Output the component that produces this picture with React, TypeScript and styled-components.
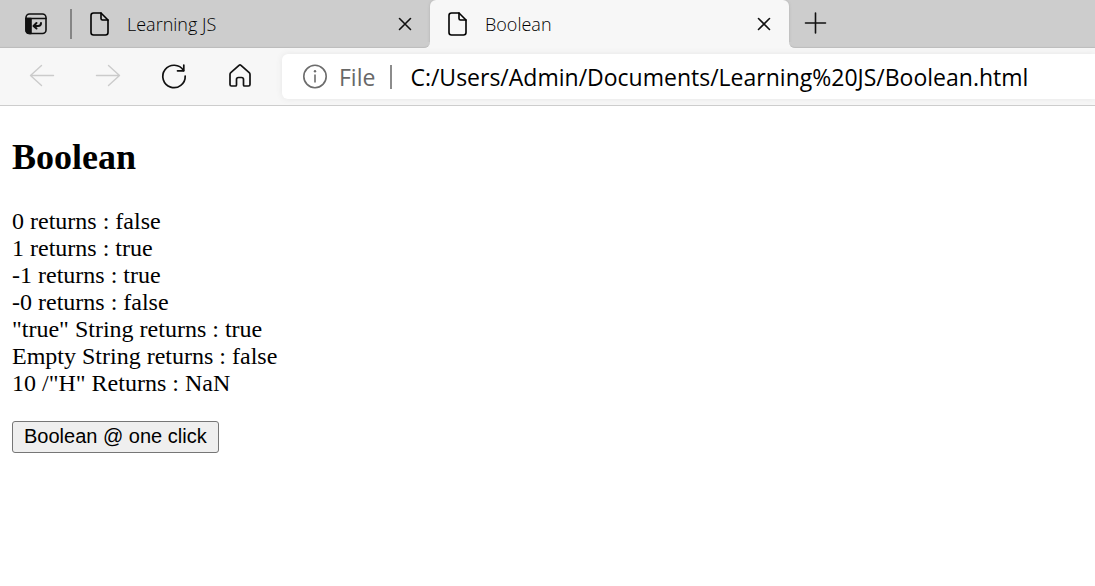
import React from "react";
import styled, { createGlobalStyle } from "styled-components";

const GlobalStyle = createGlobalStyle`
  *, *::before, *::after { box-sizing: border-box; }
  body { margin: 0; background: #fff; color: #000; }
  button, input { font: inherit; color: inherit; }
  svg { display: block; flex: none; overflow: visible; }
`;

const uiFont = `"Open Sans", "Noto Sans", sans-serif`;

const Chrome = styled.header`
  font-family: ${uiFont};
  background: #f7f7f7;
  border-bottom: 1px solid #cdcdcd;
`;

const TabBar = styled.div`
  display: flex;
  height: 48px;
  background: linear-gradient(#cdcdcd 50%, #f7f7f7 50%);
`;

const Strip = styled.div<{ $side: "left" | "right" }>`
  display: flex;
  align-items: center;
  background: #cdcdcd;
  box-shadow: inset 0 -2px 1px -1px #bcbcbc;
  ${(p) =>
    p.$side === "left"
      ? "flex: 0 0 430px; border-bottom-right-radius: 6px; padding-left: 18px;"
      : "flex: 1; border-bottom-left-radius: 6px; padding-left: 8px;"}
`;

const IconButton = styled.button<{ $faded?: boolean }>`
  display: flex;
  flex: none;
  align-items: center;
  justify-content: center;
  width: 36px;
  height: 36px;
  padding: 0;
  border: 0;
  background: transparent;
  color: ${(p) => (p.$faded ? "#cbcbcb" : "#111")};
`;

const TabDivider = styled.span`
  width: 2px;
  height: 30px;
  margin-left: 16px;
  background: #858585;
`;

const Tab = styled.div<{ $active?: boolean }>`
  display: flex;
  align-items: center;
  height: 48px;
  ${(p) =>
    p.$active
      ? "flex: 0 0 359px; padding: 0 7px 0 18px; background: #f7f7f7; border-radius: 6px 6px 0 0; box-shadow: 0 0 3px #b0b0b0; clip-path: inset(0 -3px 6px -3px);"
      : "flex: 1; padding: 0 7px 0 18px;"}
`;

const TabTitle = styled.button`
  display: flex;
  flex: 1;
  align-items: center;
  gap: 18px;
  padding: 0;
  border: 0;
  background: transparent;
  font-size: 18px;
  font-weight: 340;
  line-height: 24px;
  color: #000;
`;

const Toolbar = styled.nav`
  display: flex;
  align-items: center;
  height: 57px;
  padding: 6px 0 6px 24px;
`;

const NavButtons = styled.div`
  display: flex;
  flex: none;
  gap: 30px;
  padding-bottom: 2px;
`;

const AddressBar = styled.div`
  display: flex;
  flex: 1;
  align-items: center;
  height: 45px;
  margin-left: 24px;
  padding-left: 20px;
  background: #fff;
  border-radius: 6px 0 0 6px;
  box-shadow: 0 0 6px #e6e6e6;
  font-size: 23px;
  font-weight: 370;
  line-height: 30px;
`;

const Scheme = styled.label`
  padding-left: 11px;
  color: #686868;
`;

const AddressDivider = styled.span`
  width: 2px;
  height: 24px;
  margin: 0 18px 0 15px;
  background: #8c8c8c;
`;

const AddressInput = styled.input`
  flex: 1;
  min-width: 0;
  padding: 0;
  border: 0;
  outline: 0;
  background: transparent;
`;

const Page = styled.main`
  padding: 30px 12px;
  font-family: "Liberation Serif", "Times New Roman", serif;
  font-size: 24px;
  line-height: 27px;
`;

const Heading = styled.h2`
  margin: 0 0 30px;
  font-size: 36px;
  line-height: 42px;
`;

const Result = styled.div``;

const ActionButton = styled.button`
  height: 32px;
  margin-top: 24px;
  padding: 0 11px 2px;
  border: 1px solid #767676;
  border-radius: 3px;
  background: #efefef;
  font-family: "Liberation Sans", Arial, sans-serif;
  font-size: 20px;
  line-height: 24px;
`;

const stroke = {
  fill: "none",
  stroke: "currentColor",
  strokeWidth: 1.6,
  strokeLinecap: "round" as const,
  strokeLinejoin: "round" as const,
};

const TabActionsIcon = () => (
  <svg width="22" height="22" viewBox="0 0 22 22" {...stroke}>
    <rect x="1" y="1" width="20" height="19.5" rx="3.5" />
    <path d="M1 5.5H6V20.5H4.5Q1 20.5 1 17Z" fill="currentColor" />
    <path d="M1 5.5H21" />
    <path d="M16 10Q16 13 13 13H9M11.5 10L8.5 13L11.5 15.5" strokeWidth="2" />
  </svg>
);

const FileIcon = () => (
  <svg width="19" height="24" viewBox="0 0 19 24" {...stroke}>
    <path d="M3.5 1H11L18 8V20.5Q18 23 15.5 23H3.5Q1 23 1 20.5V3.5Q1 1 3.5 1Z" />
    <path d="M11 1V6.5Q11 8 12.5 8H18" />
  </svg>
);

const CloseIcon = () => (
  <svg width="12" height="12" viewBox="0 0 12 12" {...stroke}>
    <path d="M0.5 0.5L11.5 11.5M11.5 0.5L0.5 11.5" />
  </svg>
);

const PlusIcon = () => (
  <svg width="20" height="20" viewBox="0 0 20 20" {...stroke}>
    <path d="M10.5 -1V19M0.5 9H20.5" />
  </svg>
);

const ArrowIcon = ({ forward }: { forward?: boolean }) => (
  <svg width="24" height="20" viewBox="0 0 24 20" {...stroke} strokeWidth="1.4">
    <path d={forward ? "M0.5 9.5H23.5M12.5 -0.5L23.5 9.5L12.5 19.5" : "M23.5 9.5H0.5M11.5 -0.5L0.5 9.5L11.5 19.5"} />
  </svg>
);

const ReloadIcon = () => (
  <svg width="24" height="24" viewBox="0 0 24 24" {...stroke} strokeWidth="1.7">
    <path d="M21.5 6.5A11.2 11.2 0 1 0 23.2 12" />
    <path d="M21.8 1V6.8H15.5" />
  </svg>
);

const HomeIcon = () => (
  <svg width="22" height="23" viewBox="0 0 22 23" {...stroke} strokeWidth="1.7">
    <path d="M1 10.5Q1 9.4 1.8 8.7L10 1.3Q11 0.5 12 1.3L20.2 8.7Q21 9.4 21 10.5V20.5Q21 22 19.5 22H15.5Q14.5 22 14.5 21V15.5Q14.5 13.5 12.5 13.5H9.5Q7.5 13.5 7.5 15.5V21Q7.5 22 6.5 22H2.5Q1 22 1 20.5Z" />
  </svg>
);

const InfoIcon = () => (
  <svg width="26" height="25" viewBox="0 0 26 25" fill="none" stroke="#6c6c6c" strokeWidth="1.6">
    <circle cx="13" cy="12.5" r="11.2" />
    <path d="M13 10.5V18.5" />
    <circle cx="13" cy="7.3" r="1.2" fill="#6c6c6c" stroke="none" />
  </svg>
);

const results = [
  "0 returns : false",
  "1 returns : true",
  "-1 returns : true",
  "-0 returns : false",
  '"true" String returns : true',
  "Empty String returns : false",
  '10 /"H" Returns : NaN',
];

const BrowserTab = ({ title, active }: { title: string; active?: boolean }) => (
  <Tab $active={active}>
    <TabTitle type="button">
      <FileIcon />
      {title}
    </TabTitle>
    <IconButton type="button" aria-label={`Close ${title}`}>
      <CloseIcon />
    </IconButton>
  </Tab>
);

export default function App() {
  return (
    <>
      <GlobalStyle />
      <Chrome>
        <TabBar>
          <Strip $side="left">
            <IconButton type="button" aria-label="Tab actions">
              <TabActionsIcon />
            </IconButton>
            <TabDivider />
            <BrowserTab title="Learning JS" />
          </Strip>
          <BrowserTab title="Boolean" active />
          <Strip $side="right">
            <IconButton type="button" aria-label="New tab">
              <PlusIcon />
            </IconButton>
          </Strip>
        </TabBar>
        <Toolbar>
          <NavButtons>
            <IconButton type="button" aria-label="Back" $faded>
              <ArrowIcon />
            </IconButton>
            <IconButton type="button" aria-label="Forward" $faded>
              <ArrowIcon forward />
            </IconButton>
            <IconButton type="button" aria-label="Refresh">
              <ReloadIcon />
            </IconButton>
            <IconButton type="button" aria-label="Home">
              <HomeIcon />
            </IconButton>
          </NavButtons>
          <AddressBar>
            <InfoIcon />
            <Scheme htmlFor="address">File</Scheme>
            <AddressDivider />
            <AddressInput
              id="address"
              type="text"
              spellCheck={false}
              defaultValue="C:/Users/Admin/Documents/Learning%20JS/Boolean.html"
            />
          </AddressBar>
        </Toolbar>
      </Chrome>
      <Page>
        <Heading>Boolean</Heading>
        {results.map((line) => (
          <Result key={line}>{line}</Result>
        ))}
        <ActionButton type="button">Boolean @ one click</ActionButton>
      </Page>
    </>
  );
}
